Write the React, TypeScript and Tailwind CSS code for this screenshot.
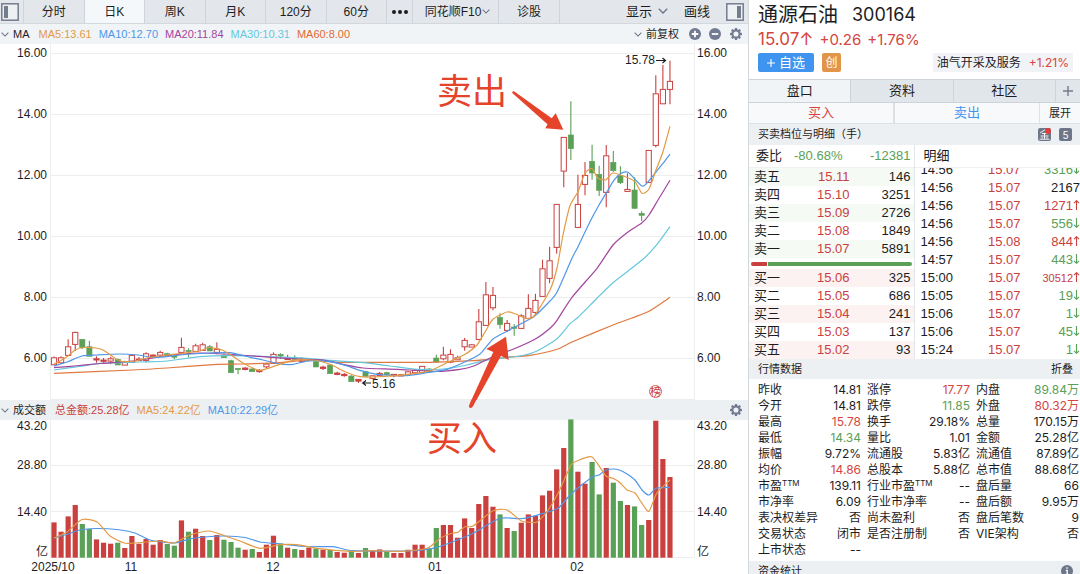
import React from "react";

const RED = "#c9403f";
const GREEN = "#5aa056";
const ORANGE = "#e39a45";
const BLUE = "#4f97e8";
const PURPLE = "#a2459f";
const CYAN = "#64c8dd";
const RUST = "#df7a42";
const GRID = "#eeeeee";
const INK = "#1d1d1f";
const MARK = "#e5432a";

type Candle = ["r" | "g", number, number, number, number];

// side, high, body top, body bottom, low
const candles: Candle[] = [
  ["r", 356.5, 357.7, 364.7, 364.7], ["r", 356.3, 357.7, 362.7, 364], ["r", 339.3, 346.7, 355.3, 355.3],
  ["r", 331.7, 332.3, 344.3, 351], ["g", 339.3, 339.3, 347.7, 349], ["g", 340.7, 346.7, 356.3, 356.3],
  ["r", 356.3, 358.7, 359.7, 362.7], ["r", 358, 360, 361, 362.7], ["r", 356.7, 358.7, 361, 364.3],
  ["g", 358.5, 359.3, 365, 365], ["r", 360.7, 362.3, 365, 365], ["r", 354, 355.3, 362.3, 362.3],
  ["r", 357, 359, 360, 361.3], ["r", 352.3, 353.7, 360.3, 362.3], ["r", 354.5, 355, 356.3, 356.3],
  ["r", 350.7, 352.3, 355, 355], ["g", 352.7, 353.7, 355, 356], ["g", 355.3, 356, 357, 359.3],
  ["r", 337.7, 347.3, 352.3, 352.3], ["g", 348.3, 350.3, 351.7, 357.3], ["r", 343.7, 345.7, 351.3, 351.3],
  ["r", 342.7, 344.7, 350.3, 350.3], ["g", 345, 346.7, 351, 351], ["r", 342.3, 349.3, 352.3, 354.3],
  ["g", 354.3, 355.7, 357.7, 357.7], ["g", 359.7, 360.7, 372.7, 372.7], ["g", 368.3, 368.3, 369.7, 374.3],
  ["r", 367, 368, 369.3, 370.3], ["g", 368, 369, 371.7, 371.7], ["r", 369, 370.3, 371.3, 372.7],
  ["r", 362.7, 364, 366.7, 368.3], ["r", 352.3, 354.3, 363.3, 363.3], ["g", 353.3, 354.3, 356, 359],
  ["r", 354.7, 358.3, 359.3, 360], ["g", 355.3, 357.3, 359.3, 359.3], ["r", 357.5, 358.7, 361.3, 361.3],
  ["r", 358.6, 359.3, 360.3, 361.3], ["g", 361, 361.7, 367, 367], ["r", 365.7, 367, 368.3, 370],
  ["g", 364, 365, 373.7, 373.7], ["r", 371.7, 373, 374.3, 375.3], ["r", 373, 374.3, 375.3, 376.7],
  ["g", 375.3, 376, 381.7, 381.7], ["r", 379, 379.3, 381, 383], ["g", 370.7, 371.7, 376.3, 376.3],
  ["r", 375.7, 375.7, 378.3, 379.3], ["r", 372, 373.3, 375.3, 375.3], ["g", 371.7, 372.7, 374.7, 374.7],
  ["r", 374.3, 374.3, 375.7, 377.3], ["r", 374.2, 374.7, 375.7, 376], ["r", 371, 371.7, 374.3, 374.3],
  ["r", 369, 370.3, 372.7, 373.5], ["r", 366, 366.3, 372.3, 372.3], ["g", 368, 369, 371.7, 371.7],
  ["g", 354.7, 358, 362, 362], ["r", 346.7, 355, 358.7, 360.3], ["r", 349.3, 354.3, 362, 363.3],
  ["r", 355.7, 357.7, 359.7, 359.7], ["r", 338, 340.3, 346.7, 350.7], ["r", 344, 344.7, 347, 347],
  ["r", 309, 321.7, 339.3, 340.3], ["r", 282, 294.7, 325.3, 325.3], ["r", 287, 295.3, 307.7, 310.3],
  ["g", 313.3, 317.3, 324.7, 328.7], ["r", 320, 323.3, 330.3, 332], ["g", 324, 327, 328.3, 335.7],
  ["r", 314.3, 315.7, 328.3, 328.3], ["r", 294.3, 308.3, 318.3, 318.3], ["r", 293.7, 300.3, 312.3, 315],
  ["r", 259.7, 268.7, 296.3, 296.3], ["r", 246.7, 260.7, 278.3, 283.3], ["r", 204.3, 204.3, 247.3, 253.7],
  ["r", 137.3, 137.3, 171, 187.3], ["g", 101.3, 135, 148.7, 160], ["r", 174.7, 204.3, 227.3, 227.3],
  ["r", 162, 175.3, 184.3, 195.3], ["g", 144.7, 161.3, 173, 179.7], ["g", 165.7, 174.3, 190.3, 196],
  ["r", 145, 155.7, 192.3, 207.3], ["g", 151, 162.3, 170.7, 172], ["g", 166.3, 175.7, 182.7, 184],
  ["r", 173.3, 189.3, 191.3, 191.3], ["g", 177.3, 190, 208.3, 209], ["g", 211.3, 213.3, 215.3, 221],
  ["r", 150.3, 150.3, 182.3, 182.3], ["r", 75.3, 93.7, 145.3, 147.3], ["r", 65, 89.3, 103.7, 103.7],
  ["r", 60.7, 81.3, 89.3, 104.3],
];

// turnover bar heights, one for each candle
const volumes = [
  35.3, 26, 41.3, 52.7, 33.7, 28.7, 18.3, 15, 14, 15, 9.7, 21.7, 14, 18.7, 13, 17.7, 13.7, 12, 37.3, 26, 29, 21.7,
  17.7, 22.7, 18, 15.7, 10, 8, 8.7, 5.7, 13, 22, 14.3, 10, 8.7, 7.7, 10, 9, 8, 7.7, 5.7, 5, 7, 4.7, 9.7, 7, 8.3, 6.3,
  4.7, 4.7, 8, 13, 13, 9.3, 29.7, 32.7, 32.7, 20, 39.3, 29.7, 53.7, 61.7, 51, 43.3, 29.7, 26.7, 35, 43.3, 41.7, 62.3,
  67, 88.3, 109.7, 138.3, 86, 74, 95.7, 63.3, 89.7, 75, 56.7, 52.7, 51.3, 32.7, 37.7, 137, 98.7, 80.7,
];

const cx = (i: number) => 54 + i * 7.08;

const ma5: number[][] = [[54,364],[60,361],[68,356],[75,350],[84,347.5],[96,348],[103,350],[112,356],[120,361],[135,361],[147,358],[160,356],[180,353.5],[200,351],[209,347.5],[222,350],[231,355],[243,363],[259,370.3],[273,366.7],[293,360.3],[313,360],[330,364.3],[345,371.7],[360,376.7],[372,377],[397,375.7],[413,373.7],[430,370.7],[448,362.3],[465,354.3],[477,345],[485,332],[493,319.3],[507,312],[515,313.7],[527,318.7],[535,315],[550,290],[557,268],[563,235],[570,205.7],[578,191.7],[585,173.3],[592,168.7],[598,178.3],[606,179.7],[613,173],[628,177.7],[635,181.7],[642,193.3],[649,189],[656,170],[663,151.7],[670,126.3]];
const ma10: number[][] = [[54,366],[67,362],[82,356],[97,355],[120,354],[138,355],[155,357.5],[180,355],[210,353],[230,352.7],[250,357.3],[263,360],[280,364],[293,364.3],[310,360.7],[330,361.7],[347,366],[360,370.3],[377,374.3],[407,375.7],[427,372.7],[447,369.3],[462,363.3],[480,354],[493,339],[508,330.7],[522,323.3],[535,315.7],[550,301],[557,292.3],[572,258.3],[578,246.7],[590,221.7],[599,205],[607,191.7],[613,181.7],[620,174],[628,172.3],[642,186],[649,180.7],[663,163.3],[670,154]];
const ma20: number[][] = [[54,367.7],[80,365.5],[100,363.5],[133,361],[167,355.7],[200,353],[240,355],[270,357.3],[297,359],[323,360],[343,364.3],[363,368],[397,369.3],[437,371.3],[460,369.3],[473,366.3],[493,356.7],[513,349.3],[535,339.3],[550,328.3],[557,320.3],[572,297.3],[597,268.3],[613,245],[627,232.7],[642,222.7],[649,215],[658,200],[670,180.3]];
const ma30: number[][] = [[54,370],[83,366],[100,363.3],[140,362],[167,361],[200,356.7],[233,355.7],[297,357.7],[330,360.3],[363,362.7],[390,366],[417,369.3],[443,369],[467,365],[490,359.3],[520,356],[537,351],[557,338.7],[570,323.7],[578,317.3],[597,298.3],[613,282.7],[643,259.3],[657,244.3],[670,226.7]];
const ma60: number[][] = [[54,373.3],[133,370],[167,368],[217,364.3],[240,364],[280,362.7],[310,360],[340,362.3],[430,362.3],[473,360.7],[507,357.3],[530,355.3],[557,349.3],[572,342],[613,325],[648,311.7],[670,297.3]];
const vol5: number[][] = [[54,538],[67,532],[82,519.5],[97,522],[110,536],[124,543],[135,543],[160,541],[174,543],[190,535],[209,531],[225,536],[240,541],[260,548.3],[280,544.7],[297,544.7],[317,548.3],[350,551.3],[373,550.7],[400,551.3],[427,548.3],[440,538.3],[452,533.3],[458,532.3],[465,526.7],[473,526],[493,510.7],[507,510],[521,520.7],[530,522.3],[537,522],[547,511.7],[558,493.3],[571,465],[577,461],[592,457],[606,476],[613,478.3],[620,482.7],[627,490],[635,493],[642,503.3],[649,511.3],[657,492.7],[670,480]];
const vol10: number[][] = [[54,538],[68,534],[80,530],[95,528.5],[117,529.5],[135,533],[150,540],[174,543],[190,539],[205,537],[225,536],[245,537.5],[260,542],[280,544],[307,546.7],[333,546.7],[353,550.7],[407,551],[433,548.3],[453,541.7],[473,533.3],[500,518.3],[521,518.7],[540,514.3],[558,508.3],[571,494],[592,477.3],[599,475],[606,470],[613,469],[620,470.3],[627,474],[635,480],[642,490],[649,495],[656,488.3],[670,487.3]];

function Line({ points, color }: { points: number[][]; color: string }) {
  let d = `M${points[0][0]} ${points[0][1]}`;
  for (let i = 0; i < points.length - 1; i++) {
    const p0 = points[Math.max(i - 1, 0)];
    const p1 = points[i];
    const p2 = points[i + 1];
    const p3 = points[Math.min(i + 2, points.length - 1)];
    const k = 0.11;
    d += `C${p1[0] + (p2[0] - p0[0]) * k} ${p1[1] + (p2[1] - p0[1]) * k} ${p2[0] - (p3[0] - p1[0]) * k} ${p2[1] - (p3[1] - p1[1]) * k} ${p2[0]} ${p2[1]}`;
  }
  return <path d={d} fill="none" stroke={color} strokeWidth="1.2" strokeLinejoin="round" />;
}

function PriceChart() {
  const ticks: [string, number][] = [["16.00", 53], ["14.00", 114], ["12.00", 175], ["10.00", 236], ["8.00", 297], ["6.00", 358]];
  return (
    <svg viewBox="0 44 748 356" className="block w-full bg-white" role="img" aria-label="日K">
      {ticks.map(([t, y]) => (
        <g key={t} fontSize="12" fill={INK}>
          <line x1="51" x2="694" y1={y + 0.5} y2={y + 0.5} stroke={GRID} />
          <text x="47" y={y + 4} textAnchor="end">{t}</text>
          <text x="697" y={y + 4}>{t}</text>
        </g>
      ))}
      <path d="M50.5 44V400M694.5 44V400M50 399.5H695" stroke={GRID} fill="none" />
      {candles.map(([side, hi, top, bottom, lo], i) => {
        const x = cx(i);
        const color = side === "r" ? RED : GREEN;
        const h = Math.max(bottom - top, 1.2);
        return (
          <g key={i} stroke={color}>
            <path d={`M${x} ${hi}V${top}M${x} ${bottom}V${lo}`} strokeWidth="1.1" />
            {side === "r" ? (
              <rect x={x - 2.6} y={top + 0.1} width="5.2" height={h} fill={h > 1.8 ? "#fff" : color} strokeWidth="1" />
            ) : (
              <rect x={x - 2.6} y={top} width="5.2" height={h} fill={color} strokeWidth="0.6" />
            )}
          </g>
        );
      })}
      <Line points={ma60} color={RUST} />
      <Line points={ma30} color={CYAN} />
      <Line points={ma20} color={PURPLE} />
      <Line points={ma10} color={BLUE} />
      <Line points={ma5} color={ORANGE} />
      <g fontSize="12" fill={INK}>
        <text x="625" y="64">15.78</text>
        <text x="372" y="388">5.16</text>
      </g>
      <path d="M656 60.5H665M662.5 58L665.5 60.5L662.5 63" stroke={INK} fill="none" strokeWidth="1.2" />
      <path d="M371 383H363M366 380.5L362.7 383L366 385.5" stroke={INK} fill="none" strokeWidth="1.2" />
      <circle cx="655.5" cy="391.5" r="6" fill="#fff" stroke={RED} strokeWidth="0.8" />
      <text x="655.5" y="395.5" fontSize="11" textAnchor="middle" fill={RED}>榜</text>
      <path d="M512.3 93Q511.600 90.800 514 91.200L551.700 118.300L555.700 113.300L563.300 129.700L545.300 128.300L547.500 124.300Z" fill={MARK} />
      <text x="437" y="104" fontSize="35" fill={MARK}>卖出</text>
      <path d="M506 336.700L508.700 360L501 355.700L476.500 400H471.500L493.300 352L486.300 349Z" fill={MARK} />
    </svg>
  );
}

function VolumeChart() {
  const ticks: [string, number][] = [["43.20", 426], ["28.80", 465], ["14.40", 512]];
  const dates: [string, number][] = [["2025/10", 53], ["11", 131], ["12", 273], ["01", 435], ["02", 577]];
  return (
    <svg viewBox="0 420 748 154" className="block w-full overflow-visible bg-white" role="img" aria-label="成交额">
      <path d="M50.5 420V557.500H694.500V420M51 465.500H694M51 511.500H694" stroke={GRID} fill="none" />
      {volumes.map((h, i) => (
        <rect key={i} x={cx(i) - 2.6} y={557.7 - h} width="5.2" height={h} fill={candles[i][0] === "r" ? RED : GREEN} />
      ))}
      <Line points={vol10} color={BLUE} />
      <Line points={vol5} color={ORANGE} />
      <g fontSize="12" fill={INK}>
        {ticks.map(([t, y]) => (
          <g key={t}>
            <text x="47" y={y + 4} textAnchor="end">{t}</text>
            <text x="697" y={y + 4}>{t}</text>
          </g>
        ))}
        <text x="48" y="556" textAnchor="end">亿</text>
        <text x="697" y="556">亿</text>
        {dates.map(([t, x]) => (
          <text key={t} x={x} y="571" textAnchor="middle">{t}</text>
        ))}
      </g>
      <path d="M476.500 399.500L473.200 406Q471 409.500 469 407Q468.500 406 471.500 399.500Z" fill={MARK} />
      <text x="427" y="451" fontSize="35" fill={MARK}>买入</text>
    </svg>
  );
}

function Chevron({ small = false }: { small?: boolean }) {
  return (
    <svg viewBox="0 0 10 6" className={small ? "h-[5px] w-2" : "h-1.5 w-2.5"} aria-hidden="true">
      <path d="M0.800 0.800L5 5L9.200 0.800" fill="none" stroke="#6b7285" strokeWidth="1.3" />
    </svg>
  );
}

function Gear() {
  return (
    <svg viewBox="-7 -7 14 14" className="h-3.5 w-3.5" aria-hidden="true">
      <g fill="#737b93">
        {[0, 45, 90, 135, 180, 225, 270, 315].map((a) => (
          <path key={a} d="M-1.500 -3.800L-1 -6H1L1.500 -3.800Z" transform={`rotate(${a})`} />
        ))}
      </g>
      <circle r="3.500" fill="none" stroke="#737b93" strokeWidth="1.900" />
    </svg>
  );
}

function Round({ plus }: { plus: boolean }) {
  return (
    <svg viewBox="0 0 12 12" className="h-3 w-3" aria-hidden="true">
      <circle cx="6" cy="6" r="6" fill="#737b93" />
      <path d={plus ? "M2.800 6H9.200M6 2.800V9.200" : "M2.800 6H9.200"} stroke="#fff" strokeWidth="1.800" />
    </svg>
  );
}

function PanelIcon({ right }: { right: boolean }) {
  return (
    <svg viewBox="0 0 18 18" className="h-[18px] w-[18px]" aria-hidden="true">
      <rect x="0.800" y="0.800" width="16.400" height="16.400" fill="#eef1f4" stroke="#747d8e" strokeWidth="1.500" />
      <rect x={right ? 11 : 3} y="3" width="4" height="12" fill="#747d8e" />
    </svg>
  );
}

const periods = ["分时", "日K", "周K", "月K", "120分", "60分"];

function Toolbar() {
  return (
    <div className="flex h-6 items-center border-b border-[#d3d8dd] bg-[#e3e7eb] text-xs">
      <button aria-label="左侧栏" className="flex h-full w-6 shrink-0 items-center justify-center border-r border-[#cfd4da] pr-1">
        <PanelIcon right={false} />
      </button>
      <div className="flex h-full w-[363px]">
        {periods.map((p) => (
          <button key={p} className={(p === "日K" ? "bg-[#f5f8fa] " : "") + "flex-1 border-r border-[#cfd4da]"}>
            {p}
          </button>
        ))}
      </div>
      <button aria-label="更多" className="flex h-full w-[26px] items-center justify-center gap-0.5 border-r border-[#cfd4da]">
        <i className="h-1 w-1 rounded-full bg-[#1d1d1f]" />
        <i className="h-1 w-1 rounded-full bg-[#1d1d1f]" />
        <i className="h-1 w-1 rounded-full bg-[#1d1d1f]" />
      </button>
      <button className="flex h-full w-[86px] items-center justify-center gap-px border-r border-[#cfd4da] pl-1">
        同花顺F10 <Chevron small />
      </button>
      <button className="h-full w-[61px] border-r border-[#cfd4da]">诊股</button>
      <div className="ml-auto flex items-center gap-4 pr-1 text-[13px]">
        <button className="flex items-center gap-1.5">
          显示 <Chevron />
        </button>
        <button>画线</button>
        <button aria-label="右侧栏">
          <PanelIcon right />
        </button>
      </div>
    </div>
  );
}

function LeftPanel() {
  return (
    <main className="min-w-0 flex-1">
      <Toolbar />
      <div className="flex h-5 items-center gap-[7px] bg-[#f1f4f7] pl-px pr-[5px] text-[11px]">
        <span className="mr-0.5 flex items-center gap-1 text-[#1d1d1f]">
          <Chevron small /> MA
        </span>
        <span className="text-[#e39a45]">MA5:13.61</span>
        <span className="text-[#4f97e8]">MA10:12.70</span>
        <span className="text-[#a2459f]">MA20:11.84</span>
        <span className="text-[#64c8dd]">MA30:10.31</span>
        <span className="text-[#e06a35]">MA60:8.00</span>
        <div className="ml-auto flex items-center gap-2">
          <button className="mr-0.5 flex items-center gap-1">
            <Chevron small /> 前复权
          </button>
          <button aria-label="放大">
            <Round plus />
          </button>
          <button aria-label="缩小">
            <Round plus={false} />
          </button>
          <button aria-label="设置">
            <Gear />
          </button>
        </div>
      </div>
      <PriceChart />
      <div className="flex h-5 items-center gap-[7px] bg-[#edf0f3] pl-px pr-[5px] text-[11px]">
        <span className="mr-0.5 flex items-center gap-1">
          <Chevron small /> 成交额
        </span>
        <span className="text-[#c9403f]">总金额:25.28亿</span>
        <span className="text-[#e39a45]">MA5:24.22亿</span>
        <span className="text-[#4f97e8]">MA10:22.29亿</span>
        <button aria-label="成交额设置" className="ml-auto">
          <Gear />
        </button>
      </div>
      <VolumeChart />
    </main>
  );
}

const asks = [["卖五", "15.11", "146"], ["卖四", "15.10", "3251"], ["卖三", "15.09", "2726"], ["卖二", "15.08", "1849"], ["卖一", "15.07", "5891"]];
const bids = [["买一", "15.06", "325"], ["买二", "15.05", "686"], ["买三", "15.04", "241"], ["买四", "15.03", "137"], ["买五", "15.02", "93"]];

function Book({ rows, tint, label }: { rows: string[][]; tint: string; label: string }) {
  return (
    <table aria-label={label} className="w-full table-fixed text-[13px]">
      <tbody className={tint}>
        {rows.map(([name, price, qty]) => (
          <tr key={name} className="h-[18px] leading-[18px]">
            <th scope="row" className="pl-[5px] text-left font-normal">{name}</th>
            <td className="text-right text-[#c9403f]">{price}</td>
            <td className="w-16 pr-[3px] text-right">{qty}</td>
          </tr>
        ))}
      </tbody>
    </table>
  );
}

const trades: [string, string, string, string][] = [
  ["14:56", "15.07", "3316", "↓"], ["14:56", "15.07", "2167", ""], ["14:56", "15.07", "1271", "↑"], ["14:56", "15.07", "556", "↓"],
  ["14:56", "15.08", "844", "↑"], ["14:57", "15.07", "443", "↓"], ["15:00", "15.07", "30512", "↑"], ["15:05", "15.07", "19", "↓"],
  ["15:06", "15.07", "1", "↓"], ["15:06", "15.07", "45", "↓"], ["15:24", "15.07", "1", "↓"],
];

function Direction({ dir }: { dir: string }) {
  return (
    <svg viewBox="0 0 7 10" className="inline-block h-2.5 w-[7px] align-baseline" role="img" aria-label={dir}>
      <path
        d={dir === "↓" ? "M3.500 0V9.300M1 6.800L3.500 9.300L6 6.800" : "M3.500 10V0.700M1 3.200L3.500 0.700L6 3.200"}
        fill="none"
        stroke="currentColor"
        strokeWidth="1.1"
      />
    </svg>
  );
}

function Trades() {
  return (
    <table aria-label="明细" className="-mt-[7px] w-full table-fixed text-[13px]">
      <tbody>
        {trades.map(([time, price, qty, dir], i) => (
          <tr key={i} className="h-[18px] leading-[18px]">
            <td className="w-[58px] pl-1.5">{time}</td>
            <td className="w-12 text-right text-[#c9403f]">{price}</td>
            <td
              className={
                (dir === "↓" ? "text-[#5aa056]" : dir === "↑" ? "text-[#c9403f]" : "") +
                (qty.length > 4 ? " text-[11px]" : "") +
                " text-right"
              }
            >
              {qty}
              {dir && <Direction dir={dir} />}
            </td>
          </tr>
        ))}
      </tbody>
    </table>
  );
}

const stats: [string, string, string?][] = [
  ["昨收", "14.81"], ["涨停", "17.77", "r"], ["内盘", "89.84万", "g"],
  ["今开", "14.81"], ["跌停", "11.85", "g"], ["外盘", "80.32万", "r"],
  ["最高", "15.78", "r"], ["换手", "29.18%"], ["总量", "170.15万"],
  ["最低", "14.34", "g"], ["量比", "1.01"], ["金额", "25.28亿"],
  ["振幅", "9.72%"], ["流通股", "5.83亿"], ["流通值", "87.89亿"],
  ["均价", "14.86", "r"], ["总股本", "5.88亿"], ["总市值", "88.68亿"],
  ["市盈™", "139.11"], ["行业市盈™", "--"], ["盘后量", "66"],
  ["市净率", "6.09"], ["行业市净率", "--"], ["盘后额", "9.95万"],
  ["表决权差异", "否"], ["尚未盈利", "否"], ["盘后笔数", "9"],
  ["交易状态", "闭市"], ["是否注册制", "否"], ["VIE架构", "否"],
  ["上市状态", "--"],
];

function Stats() {
  return (
    <dl className="grid grid-cols-3 gap-x-1.5 py-[3px] pl-[9px] pr-px font-['Inter','Noto_Sans_CJK_SC',sans-serif] text-xs leading-4">
      {stats.map(([k, v, c]) => (
        <div key={k} className="flex h-4 justify-between whitespace-nowrap">
          <dt>
            {k.replace("™", "")}
            {k.endsWith("™") && <sup className="-top-1 text-[8px] leading-none">TTM</sup>}
          </dt>
          <dd className={c === "r" ? "text-[#d6453f]" : c === "g" ? "text-[#5aa056]" : ""}>{v}</dd>
        </div>
      ))}
    </dl>
  );
}

function RightPanel() {
  return (
    <aside className="w-[332px] shrink-0 border-l border-[#d3d8dd] bg-white">
      <header className="flex h-[79px] flex-col pl-[9px] pr-[7px]">
        <h1 className="flex h-[30px] items-center gap-3.5 text-xl leading-7">
          通源石油 <span className="font-['Inter',sans-serif] text-[18px]">300164</span>
        </h1>
        <p className="flex h-5 items-center gap-1.5 font-['Inter',sans-serif] text-[15px] text-[#d6453f]">
          <span className="text-[17px]">15.07↑</span>
          <span>+0.26</span>
          <span>+1.76%</span>
        </p>
        <div className="flex items-center gap-2 pt-[3px]">
          <button className="flex h-[19px] w-14 items-center justify-center gap-1 rounded-xs bg-[#3f94f0] text-[13px] text-white">
            <svg viewBox="0 0 8 8" className="h-2 w-2" aria-hidden="true">
              <path d="M0 4H8M4 0V8" stroke="#fff" strokeWidth="1.100" />
            </svg>
            自选
          </button>
          <span className="flex h-[19px] w-[19px] items-center justify-center rounded-xs bg-[#e2954a] text-xs text-white">创</span>
          <a href="#sector" className="ml-auto flex h-[19px] items-center gap-2 bg-[#f1f3f6] px-1 text-xs">
            油气开采及服务 <span className="font-['Inter',sans-serif] text-xs text-[#d6453f]">+1.21%</span>
          </a>
        </div>
      </header>
      <nav className="flex h-6 border-y border-[#cdd3d9] bg-[#e1e6ea] text-[13px]">
        <button className="flex-1 border-r border-[#cdd3d9] bg-[#f1f4f7]">盘口</button>
        <button className="flex-1 border-r border-[#cdd3d9]">资料</button>
        <button className="flex-1 border-r border-[#cdd3d9]">社区</button>
        <button aria-label="添加" className="flex w-6 items-center justify-center">
          <svg viewBox="0 0 10 10" className="h-2.5 w-2.5" aria-hidden="true">
            <path d="M0 5H10M5 0V10" stroke="#737b8c" strokeWidth="1.400" />
          </svg>
        </button>
      </nav>
      <div className="flex h-[21px] border-b border-[#dde1e5] bg-[#f7f9fb] text-[13px]">
        <button className="flex-1 border-r-2 border-[#dde1e5] text-[#d6453f]">买入</button>
        <button className="flex-1 border-r border-[#dde1e5] text-[#3f94f0]">卖出</button>
        <button className="w-10 text-[11px]">展开</button>
      </div>
      <div className="flex h-[21px] items-center gap-2 bg-[#edf0f3] pl-[9px] pr-2 text-[11px]">
        <h2 className="mr-auto">买卖档位与明细（手）</h2>
        <svg viewBox="0 0 13 13" className="h-[13px] w-[13px]" aria-hidden="true">
          <rect width="13" height="13" rx="2" fill="#6e778a" />
          <path d="M2 5L6.500 2L10 5M4 5.500H9M2.500 8H10.500M6.500 5.500V11M4 9V10.500M9 9V10.500M1.500 11.200H11.500" stroke="#fff" fill="none" strokeWidth="0.900" />
          <circle cx="10" cy="3" r="2.900" fill="#e23b38" />
        </svg>
        <span className="flex h-[13px] w-[13px] items-center justify-center rounded-xs bg-[#6e778a] font-['Inter',sans-serif] text-[10px] leading-none text-white">5</span>
      </div>
      <div className="grid grid-cols-2">
        <div className="border-r border-[#e3e6e9]">
          <div className="flex h-[23px] items-center border-b border-[#eef0f2] pl-[7px] pr-[3px] text-[13px]">
            <span className="mr-3">委比</span>
            <span className="text-[#5aa056]">-80.68%</span>
            <span className="ml-auto text-[#5aa056]">-12381</span>
          </div>
          <Book rows={asks} label="卖盘" tint="[&>tr:nth-child(odd)]:bg-[#f5faf5]" />
          <div className="flex h-[11px] items-center gap-px px-0.5">
            <span className="h-1 w-[10%] rounded-l-full bg-[#c9403f]" />
            <span className="h-1 flex-1 rounded-r-full bg-[#5aa056]" />
          </div>
          <Book rows={bids} label="买盘" tint="[&>tr:nth-child(odd)]:bg-[#fcf2f2]" />
        </div>
        <div className="overflow-hidden">
          <h2 className="flex h-[23px] items-center border-b border-[#eef0f2] pl-[9px] text-[13px]">明细</h2>
          <div className="overflow-hidden">
            <Trades />
          </div>
        </div>
      </div>
      <div className="flex h-5 items-center justify-between bg-[#edf0f3] pl-[9px] pr-[7px] text-[11px]">
        <h2>行情数据</h2>
        <button>折叠</button>
      </div>
      <Stats />
      <div className="flex h-5 items-center justify-between bg-[#edf0f3] pl-[9px] pr-[7px] text-[11px]">
        <h2>资金统计</h2>
        <svg viewBox="0 0 12 12" className="h-3 w-3" aria-hidden="true">
          <circle cx="6" cy="6" r="6" fill="#6e778a" />
          <path d="M6 2.200V3.800M4.800 5.300H6.200V9.300M4.600 9.300H7.600" stroke="#fff" strokeWidth="1.300" fill="none" />
        </svg>
      </div>
    </aside>
  );
}

export default function App() {
  return (
    <div className="flex h-screen items-start overflow-hidden bg-white font-['Liberation_Sans','Noto_Sans_CJK_SC',sans-serif] text-[#1d1d1f]">
      <LeftPanel />
      <RightPanel />
    </div>
  );
}
